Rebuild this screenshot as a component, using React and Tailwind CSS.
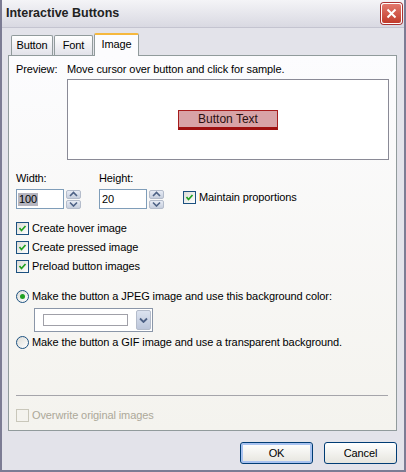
import React from 'react';

const font = { fontFamily: '"Liberation Sans", Arial, sans-serif' };

const Check = ({ checked = true, disabled = false }) => (
  <span
    className={`w-[13px] h-[13px] flex items-center justify-center shrink-0 border ${
      disabled ? 'border-[#c9c7ba] bg-[#f4f3ee]' : 'border-[#1c5180] bg-gradient-to-br from-[#dcdcd7] to-white'
    }`}
  >
    {checked && (
      <svg width="9" height="9" viewBox="0 0 9 9">
        <path d="M1.5 4 L3.5 6.5 L7.5 2" stroke="#21a121" strokeWidth="1.7" fill="none" />
      </svg>
    )}
  </span>
);

const Radio = ({ checked }) => (
  <span className="w-[13px] h-[13px] rounded-full border border-[#1c5180] bg-gradient-to-br from-[#dcdcd7] to-white flex items-center justify-center shrink-0">
    {checked && <span className="w-[5px] h-[5px] rounded-full bg-[#21a121]" />}
  </span>
);

const Spinner = () => (
  <div className="flex flex-col gap-[1px] w-[15px] h-[19px]">
    {['M1 5 L4.5 1.5 L8 5', 'M1 1.5 L4.5 5 L8 1.5'].map((d, i) => (
      <div
        key={i}
        className="flex-1 flex items-center justify-center rounded-[2px] border border-[#b4bccb] bg-gradient-to-b from-[#e8ecf5] to-[#c6cedd]"
      >
        <svg width="9" height="6" viewBox="0 0 9 6">
          <path d={d} stroke="#4d6185" strokeWidth="1.6" fill="none" />
        </svg>
      </div>
    ))}
  </div>
);

const NumField = ({ label, value, selected }) => (
  <div className="flex flex-col">
    <span className="h-[13px] leading-[13px]">{label}</span>
    <div className="flex items-center gap-[2px] mt-[4px]">
      <div className="w-[48px] h-[20px] border border-[#7f9db9] bg-white flex items-center pl-[1px]">
        <span className={selected ? 'bg-[#b5b5c0] px-[1px] leading-[13px]' : 'px-[1px] leading-[13px]'}>{value}</span>
      </div>
      <Spinner />
    </div>
  </div>
);

const CheckRow = ({ label, checked = true, disabled }) => (
  <label className={`flex items-center gap-[3px] h-[13px] ${disabled ? 'text-[#aca899]' : ''}`}>
    <Check checked={checked} disabled={disabled} />
    <span className="leading-[13px]">{label}</span>
  </label>
);

const DialogButton = ({ children, primary }) => (
  <button
    className={`w-[73px] h-[22px] rounded-[3px] border border-[#003c74] bg-gradient-to-b from-white to-[#e6e5de] text-[11px] text-black ${
      primary ? 'shadow-[inset_0_0_0_2px_#a8c2f0]' : ''
    }`}
  >
    {children}
  </button>
);

export default function App() {
  return (
    <div
      className="w-[406px] h-[472px] bg-[#e3e3ea] flex flex-col border-x-2 border-b-2 border-[#7c7c94] text-[11px] tracking-[-0.1px] text-black"
      style={font}
    >
      {/* title bar */}
      <div className="h-[28px] flex items-center justify-between pl-[4px] pr-[2px] bg-gradient-to-b from-[#f4f4f7] to-[#d9d9e2] border-b border-[#c4c4d0]">
        <span className="text-[12.5px] font-bold tracking-normal text-[#222]">Interactive Buttons</span>
        <div className="w-[21px] h-[21px] rounded-[3px] border border-white bg-gradient-to-b from-[#e2786d] to-[#c13a2b] flex items-center justify-center shadow-[0_0_0_1px_#a33]">
          <svg width="11" height="11" viewBox="0 0 11 11">
            <path d="M1.5 1.5 L9.5 9.5 M9.5 1.5 L1.5 9.5" stroke="white" strokeWidth="2" />
          </svg>
        </div>
      </div>

      {/* tabs */}
      <div className="flex items-end h-[26px] pl-[8px] mt-[1px]">
        <div className="ml-[1px] w-[42px] h-[20px] flex items-center justify-center border border-b-0 border-[#919b9c] rounded-t-[2px] bg-gradient-to-b from-white to-[#e2e2e9]">
          Button
        </div>
        <div className="ml-[1px] w-[39px] h-[20px] flex items-center justify-center border border-b-0 border-[#919b9c] rounded-t-[2px] bg-gradient-to-b from-white to-[#e2e2e9]">
          Font
        </div>
        <div className="ml-[1px] w-[45px] h-[23px] -mb-[1px] relative z-10 flex items-center justify-center border border-b-0 border-[#919b9c] border-t-[2px] border-t-[#f6b83d] rounded-t-[2px] bg-[#fcfcfe] pb-[3px]">
          Image
        </div>
      </div>

      {/* panel */}
      <div className="ml-[6px] mr-[7px] h-[376px] border border-[#919b9c] bg-gradient-to-b from-[#fcfcfe] to-[#f4f3ee] px-[7px] pt-[7px] flex flex-col">
        <div className="flex h-[13px] leading-[13px]">
          <span className="w-[51px]">Preview:</span>
          <span>Move cursor over button and click for sample.</span>
        </div>
        <div className="ml-[51px] mt-[3px] w-[322px] h-[81px] border border-[#8a8a96] bg-white flex items-center justify-center">
          <div className="w-[100px] h-[20px] bg-[#d8a3a7] border-t border-x border-[#a51c1c] border-b-[3px] border-b-[#a01010] flex items-center justify-center text-[12px] leading-none tracking-normal text-[#2a1010]">
            Button Text
          </div>
        </div>

        <div className="flex items-end mt-[12px]">
          <NumField label="Width:" value="100" selected />
          <div className="ml-[18px]">
            <NumField label="Height:" value="20" />
          </div>
          <div className="ml-[19px] mb-[5px]">
            <CheckRow label="Maintain proportions" />
          </div>
        </div>

        <div className="flex flex-col gap-[6px] mt-[13px]">
          <CheckRow label="Create hover image" />
          <CheckRow label="Create pressed image" />
          <CheckRow label="Preload button images" />
        </div>

        <label className="flex items-center gap-[3px] h-[13px] mt-[17px]">
          <Radio checked />
          <span className="leading-[13px]">Make the button a JPEG image and use this background color:</span>
        </label>
        <div className="ml-[18px] mt-[5px] w-[119px] h-[24px] border border-[#8a96a8] bg-white flex items-center pl-[8px] pr-[1px]">
          <div className="w-[85px] h-[12px] border border-[#a0a0a8] bg-white" />
          <div className="ml-auto w-[15px] h-[20px] rounded-[2px] border border-[#b4bccb] bg-gradient-to-b from-[#dce3f0] to-[#bcc6da] flex items-center justify-center">
            <svg width="9" height="6" viewBox="0 0 9 6">
              <path d="M1 1.5 L4.5 5 L8 1.5" stroke="#4d6185" strokeWidth="1.8" fill="none" />
            </svg>
          </div>
        </div>
        <label className="flex items-center gap-[3px] h-[13px] mt-[4px]">
          <Radio />
          <span className="leading-[13px]">Make the button a GIF image and use a transparent background.</span>
        </label>

        <div className="mt-[46px] h-0 border-t border-[#a5a5aa] mr-[1px]" />
        <div className="mt-[13px]">
          <CheckRow label="Overwrite original images" checked={false} disabled />
        </div>
      </div>

      {/* buttons */}
      <div className="flex justify-end gap-[11px] mt-[11px] pr-[7px]">
        <DialogButton primary>OK</DialogButton>
        <DialogButton>Cancel</DialogButton>
      </div>
    </div>
  );
}
